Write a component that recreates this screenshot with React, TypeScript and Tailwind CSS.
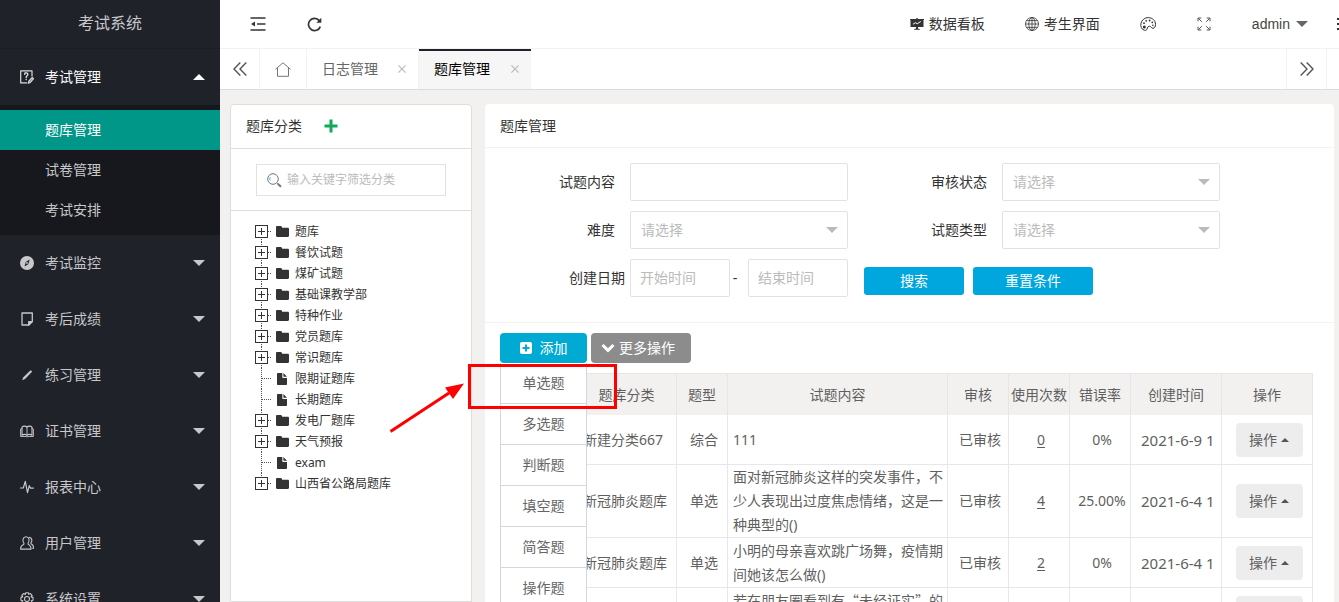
import React from "react";

type IconProps = { className?: string };

const Caret = ({ className = "" }: IconProps) => (
  <svg viewBox="0 0 12 6" className={`h-[6px] w-3 shrink-0 fill-current ${className}`} aria-hidden="true">
    <path d="M0 0h12L6 6z" />
  </svg>
);

const line = {
  fill: "none",
  stroke: "currentColor",
  strokeWidth: 1.1,
  strokeLinecap: "round" as const,
  strokeLinejoin: "round" as const,
};

const ExamIcon = () => (
  <svg viewBox="0 0 14 14" className="size-[14px] text-[#dcdcdc]" {...line}>
    <path d="M12 6V.8H.7v12.1h6" strokeWidth="1.2" />
    <path d="M4.6 4.4c.1-2.2 3.3-2 3.2 0 0 1.400-1.600 1.300-1.600 3M6.200 9.200v.3" strokeWidth="1.4" />
    <path d="M8.300 13.300l.5-2.200 3.400-3.700 1.400 1.300-3.300 3.800z" fill="currentColor" fillOpacity=".6" />
  </svg>
);
const CompassIcon = () => (
  <svg viewBox="0 0 14 14" className="size-[14px]">
    <circle cx="7" cy="7" r="7" fill="currentColor" />
    <path d="M9.700 3.600L8.200 8.200 4.500 10.500 5.800 6z" fill="#20222a" />
    <circle cx="7" cy="7" r=".9" fill="currentColor" />
  </svg>
);
const NoteIcon = () => (
  <svg viewBox="0 0 14 14" className="size-[14px]" {...line} strokeWidth={1.3}>
    <path d="M2 1h10.300v8.600l-3.600 3.400H2z" />
    <path d="M8.700 13V9.600h3.600z" fill="currentColor" />
  </svg>
);
const PencilIcon = () => (
  <svg viewBox="0 0 14 14" className="size-[14px]" fill="currentColor">
    <path d="M10.300 2.600c.7-.6 2.200.3 1.500 1.400L5 10.900l-2.800 1.300.9-2.800z" />
  </svg>
);
const BookIcon = () => (
  <svg viewBox="0 0 14 14" className="size-[14px]" {...line}>
    <path d="M7 3.200C5.800 1.800 3.200 1.800 2 3.200v8c1.500-.9 3.700-.9 5 0 1.300-.9 3.500-.9 5 0v-8c-1.200-1.400-3.800-1.400-5 0z" />
    <path d="M7 3.200v8M2 4.400L.6 5v7.500h5.500L7 13l.9-.5h5.500V5L12 4.400" strokeWidth=".9" />
  </svg>
);
const PulseIcon = () => (
  <svg viewBox="0 0 14 14" className="size-[14px]" {...line} strokeWidth={1.2}>
    <path d="M.5 8h2.800L5.300 1.300l2.200 11.400 1.800-7 1.100 2.400h3" />
  </svg>
);
const UsersIcon = () => (
  <svg viewBox="0 0 14 14" className="size-[14px]" {...line}>
    <path d="M4 7.300C1.800 4.700 3 .8 6 .8s4.200 3.900 2 6.500c-.3 1 .2 1.300 1.200 1.800 1.500.7 1.900 2 1.900 4H.6c0-2 .5-3.300 2.200-4 1-.5 1.500-.8 1.200-1.800z" />
    <path d="M9.300 1.400c2.700.4 3.200 3.400 1.700 5.400-.3.800 0 1.200.8 1.500 1.400.7 1.800 1.900 1.800 4h-1" />
  </svg>
);
const GearIcon = () => (
  <svg viewBox="0 0 14 14" className="size-[14px]" {...line}>
    <path d="M5.700.7h2.600l.4 1.700 1.500-.9 1.900 1.900-1 1.500 1.900.5v2.900l-1.800.4.9 1.500-1.900 1.900-1.500-.9-.5 1.800H5.700l-.4-1.800-1.600.9-1.900-1.900 1-1.500L.9 8.300V5.400l1.800-.5-.9-1.500 1.900-1.900 1.600.9z" />
    <circle cx="7" cy="7" r="2.500" />
  </svg>
);

const OutdentIcon = () => (
  <svg viewBox="0 0 16 14" className="h-[14px] w-4 text-[#333]" fill="none" stroke="currentColor" strokeWidth="1.600">
    <path d="M.5 1h15M7 7h8.500M.5 13h15" />
    <path d="M5 4.600v4.800L1 7z" fill="currentColor" stroke="none" />
  </svg>
);
const RefreshIcon = () => (
  <svg viewBox="0 0 15 15" className="size-[15px] text-[#333]" fill="none" stroke="currentColor" strokeWidth="1.700">
    <path d="M12.300 3.600A6.100 6.100 0 1 0 13.300 9.600" />
    <path d="M14.300.8v5H9.300z" fill="currentColor" stroke="none" />
  </svg>
);
const BoardIcon = () => (
  <svg viewBox="0 0 14 12" className="h-3 w-[14px] text-[#333]">
    <path d="M6.300 0h1.400v1H14v1h-.5v7H8v1.500l2 .7v.5H4v-.5l2-.7V9H.5V2H0V1h6.300z" fill="currentColor" />
    <path d="M3 6.300l2.300-1.600 2 1 3.500-2.200" fill="none" stroke="#fff" strokeWidth="1" />
  </svg>
);
const GlobeIcon = () => (
  <svg viewBox="0 0 14 14" className="size-[14px] text-[#333]" fill="none" stroke="currentColor" strokeWidth=".8">
    <circle cx="7" cy="7" r="6.500" />
    <ellipse cx="7" cy="7" rx="3.200" ry="6.500" />
    <path d="M7 .5v13M.5 7h13M1.500 3.600h11M1.500 10.400h11" />
  </svg>
);
const PaletteIcon = () => (
  <svg viewBox="0 0 16 14" className="h-[14px] w-4 text-[#333]" fill="none" stroke="currentColor" strokeWidth="1">
    <path d="M4.500 13.300C1.500 12.500.2 9.300 1 6.200 2 2.800 4.700.6 8.200.6c4.200 0 7.300 3 7.300 6.800 0 2.400-1.100 4-2.600 3.900-1.700-.2-1.700-2-3.500-2-2 0-1.800 1.500-2.300 2.700-.4 1-1.300 1.600-2.600 1.300z" />
    <g fill="currentColor" stroke="none">
      <circle cx="4.300" cy="10" r="1.500" />
      <circle cx="4" cy="6.200" r=".9" />
      <circle cx="6.200" cy="3.800" r=".9" />
      <circle cx="9.600" cy="3.500" r=".9" />
      <circle cx="12.300" cy="5.300" r=".9" />
      <circle cx="12.900" cy="8.200" r=".8" />
    </g>
  </svg>
);
const FullscreenIcon = () => (
  <svg viewBox="0 0 14 14" className="size-[14px] text-[#555]" fill="none" stroke="currentColor" strokeWidth="1">
    <path d="M1 4.300V1h3.300M1.200 1.200l3.600 3.600M9.700 1H13v3.300M12.800 1.200L9.200 4.800M1 9.700V13h3.300M1.200 12.800l3.600-3.600M9.700 13H13V9.700M12.800 12.800L9.200 9.200" />
  </svg>
);
const ChevronsIcon = ({ className = "" }: IconProps) => (
  <svg viewBox="0 0 14 14" className={`size-[14px] text-[#555] ${className}`} fill="none" stroke="currentColor" strokeWidth="1.400">
    <path d="M7.300.5L1 7l6.300 6.500M13.300.5L7 7l6.300 6.500" />
  </svg>
);
const HomeIcon = () => (
  <svg viewBox="0 0 16 15" className="h-[15px] w-4 text-[#777]" fill="none" stroke="currentColor" strokeWidth="1">
    <path d="M.5 7.300L8 .8l7.500 6.500M2.500 6v8.300h11V6" />
  </svg>
);
const CloseIcon = () => (
  <svg viewBox="0 0 8 8" className="size-2 text-[#bbb]" fill="none" stroke="currentColor" strokeWidth="1.200">
    <path d="M.4.4l7.200 7.200M7.600.4L.4 7.600" />
  </svg>
);
const FolderIcon = () => (
  <svg viewBox="0 0 13 11" className="h-[11px] w-[13px] fill-[#333]">
    <path d="M1.200 0h3.600c.6 0 .9.4 1.100 1l.3.700h5.600c.7 0 1.200.5 1.200 1.200v6.900c0 .7-.5 1.200-1.200 1.200H1.200C.5 11 0 10.500 0 9.800V1.200C0 .5.500 0 1.200 0z" />
  </svg>
);
const FileIcon = () => (
  <svg viewBox="0 0 13 12" className="h-3 w-[13px] fill-[#333]">
    <path d="M2 0h4.300v4.200c0 .5.300.8.800.8H11v6c0 .6-.4 1-1 1H2c-.6 0-1-.4-1-1V1c0-.6.400-1 1-1zM7.400 0L11 3.800H7.400z" />
  </svg>
);

const menus = [
  { label: "考试监控", icon: <CompassIcon /> },
  { label: "考后成绩", icon: <NoteIcon /> },
  { label: "练习管理", icon: <PencilIcon /> },
  { label: "证书管理", icon: <BookIcon /> },
  { label: "报表中心", icon: <PulseIcon /> },
  { label: "用户管理", icon: <UsersIcon /> },
  { label: "系统设置", icon: <GearIcon /> },
];

function Sidebar() {
  return (
    <aside className="flex w-[220px] shrink-0 flex-col bg-[#20222a] text-[#c7c8ca]">
      <h1 className="flex h-12 shrink-0 items-center justify-center text-base">考试系统</h1>
      <nav className="border-t border-[#1a1c22]">
        <a href="#exam" className="flex h-14 items-center pr-[15px] pl-5 text-white">
          <ExamIcon />
          <span className="ml-[11px] flex-1">考试管理</span>
          <Caret className="rotate-180" />
        </a>
        <div className="bg-[#17181d] py-[5px]">
          <a href="#bank" className="flex h-10 items-center bg-[#009688] pl-[45px] text-white">题库管理</a>
          <a href="#paper" className="flex h-10 items-center pl-[45px]">试卷管理</a>
          <a href="#plan" className="flex h-10 items-center pl-[45px]">考试安排</a>
        </div>
        {menus.map((m) => (
          <a key={m.label} href="#menu" className="flex h-14 items-center pr-[15px] pl-5">
            {m.icon}
            <span className="ml-[11px] flex-1">{m.label}</span>
            <Caret />
          </a>
        ))}
      </nav>
    </aside>
  );
}

function Header() {
  return (
    <header className="flex h-[49px] shrink-0 items-center border-b border-[#f2f2f2] bg-white pl-[10px] text-[#333]">
      <button aria-label="收起菜单" className="flex w-14 justify-center"><OutdentIcon /></button>
      <button aria-label="刷新" className="flex w-14 justify-center"><RefreshIcon /></button>
      <div className="ml-auto flex items-center">
        <a href="#board" className="flex items-center gap-[5px] px-5"><BoardIcon />数据看板</a>
        <a href="#student" className="flex items-center gap-[5px] px-5"><GlobeIcon />考生界面</a>
        <button aria-label="主题" className="flex w-14 justify-center"><PaletteIcon /></button>
        <button aria-label="全屏" className="flex w-14 justify-center"><FullscreenIcon /></button>
        <button className="flex items-center gap-[6px] px-5 text-[#444]">
          admin
          <Caret className="text-[#666]" />
        </button>
        <button aria-label="更多" className="flex w-[11px] justify-end overflow-hidden">
          <svg viewBox="0 0 2 14" className="h-[14px] w-[2px] fill-[#333]">
            <path d="M0 1h2v2H0zM0 6h2v2H0zM0 11h2v2H0z" />
          </svg>
        </button>
      </div>
    </header>
  );
}

function Tabs() {
  return (
    <div className="flex h-[41px] shrink-0 border-b border-[#dcdcdc] bg-white text-[#666]">
      <button aria-label="向左" className="flex w-10 items-center justify-center border-r border-[#f2f2f2]"><ChevronsIcon /></button>
      <button aria-label="主页" className="flex w-[47px] items-center justify-center border-r border-[#f2f2f2]"><HomeIcon /></button>
      <div className="flex w-28 items-center justify-between border-r border-[#f2f2f2] pr-3 pl-[15px]">
        <a href="#log">日志管理</a>
        <button aria-label="关闭日志管理"><CloseIcon /></button>
      </div>
      <div className="flex w-28 items-center justify-between border-t-2 border-[#20222a] bg-[#f6f6f6] pr-3 pb-[2px] pl-[15px] text-black">
        <a href="#bank">题库管理</a>
        <button aria-label="关闭题库管理"><CloseIcon /></button>
      </div>
      <button aria-label="向右" className="mr-3 ml-auto flex w-[41px] items-center justify-center border-x border-[#f2f2f2]">
        <ChevronsIcon className="rotate-180" />
      </button>
    </div>
  );
}

const tree: { name: string; leaf?: boolean }[] = [
  { name: "题库" },
  { name: "餐饮试题" },
  { name: "煤矿试题" },
  { name: "基础课教学部" },
  { name: "特种作业" },
  { name: "党员题库" },
  { name: "常识题库" },
  { name: "限期证题库", leaf: true },
  { name: "长期题库", leaf: true },
  { name: "发电厂题库" },
  { name: "天气预报" },
  { name: "exam", leaf: true },
  { name: "山西省公路局题库" },
];

function Connector({ leaf, first, last }: { leaf?: boolean; first: boolean; last: boolean }) {
  return (
    <svg viewBox="0 0 18 21" className="h-[21px] w-[18px]" fill="none" stroke="#555" shapeRendering="crispEdges">
      {!first && <path d="M6.500 0v10" strokeDasharray="1 1" />}
      {!last && <path d="M6.500 10v11" strokeDasharray="1 1" />}
      <path d="M7 10.500h10" strokeDasharray="1 1" />
      {!leaf && (
        <>
          <path d="M.5 4.500h12v12H.5z" fill="#fff" stroke="#333" />
          <path d="M3 10.500h7M6.500 7v7" stroke="#333" />
        </>
      )}
    </svg>
  );
}

function Categories() {
  return (
    <section className="w-[242px] shrink-0 rounded-t border border-[#dedede] bg-white">
      <div className="flex h-11 items-center border-b border-[#dedede] pb-[2px] pl-[15px] text-[#333]">
        <h2>题库分类</h2>
        <button aria-label="新增分类" className="ml-[22px]">
          <svg viewBox="0 0 14 14" className="size-[14px] fill-[#0fa958]">
            <path d="M5.500.5h3v5h5v3h-5v5h-3v-5h-5v-3h5z" />
          </svg>
        </button>
      </div>
      <div className="border-b border-[#dedede] px-[25px] pt-[15px] pb-[14px]">
        <label className="flex h-8 items-center gap-[5px] border border-[#e2e2e2] pl-[10px]">
          <svg viewBox="0 0 15 15" className="size-[15px] shrink-0" fill="none" stroke="#777" strokeWidth="1">
            <circle cx="6" cy="6" r="5.300" />
            <path d="M3.200 7.500a3.300 3.300 0 0 1 0-3.300" stroke="#5aa5e0" />
            <path d="M9.800 9.800l1 1" />
            <path d="M10.800 10.800l3.200 3" strokeWidth="2" />
          </svg>
          <input aria-label="筛选分类" placeholder="输入关键字筛选分类" className="w-full min-w-0 text-xs outline-none placeholder:text-[#bbb]" />
        </label>
      </div>
      <ul className="pt-[10px] pl-6 font-['Noto_Sans','Noto_Sans_CJK_SC',sans-serif] text-xs text-[#333]">
        {tree.map((n, i) => (
          <li key={n.name} className="flex h-[21px] items-center">
            <Connector leaf={n.leaf} first={i === 0} last={i === tree.length - 1} />
            <span className="ml-[3px]">{n.leaf ? <FileIcon /> : <FolderIcon />}</span>
            <a href="#node" className="ml-[6px]">{n.name}</a>
          </li>
        ))}
      </ul>
    </section>
  );
}

function SelectField({ id, label }: { id: string; label: string }) {
  return (
    <>
      <label htmlFor={id} className="pr-[15px] text-right">{label}</label>
      <div className="relative">
        <select id={id} className="h-[38px] w-full appearance-none rounded-[2px] border border-[#e2e2e2] bg-white px-[10px] text-[#bbb]">
          <option>请选择</option>
        </select>
        <Caret className="pointer-events-none absolute top-4 right-[10px] text-[#bbb]" />
      </div>
    </>
  );
}

const field = "h-[38px] rounded-[2px] border border-[#e2e2e2] px-[9px] outline-none placeholder:text-[#bbb]";

function Filters() {
  return (
    <form className="border-b border-[#f3f3f3] pt-[15px] pb-[25px] text-[#333]">
      <div className="grid grid-cols-[145px_218px_154px_218px] items-center gap-y-[10px]">
        <label htmlFor="content" className="pr-[15px] text-right">试题内容</label>
        <input id="content" className={field} />
        <SelectField id="status" label="审核状态" />
        <SelectField id="level" label="难度" />
        <SelectField id="type" label="试题类型" />
      </div>
      <div className="mt-[10px] flex items-center">
        <label htmlFor="start" className="w-[145px] pr-[5px] text-right">创建日期</label>
        <input id="start" placeholder="开始时间" className={`w-[100px] ${field}`} />
        <span className="w-[18px] pr-2 text-center">-</span>
        <input aria-label="结束时间" placeholder="结束时间" className={`w-[100px] ${field}`} />
        <button type="button" className="mt-[6px] ml-4 h-7 w-[100px] rounded-[3px] bg-[#00a6de] text-white">搜索</button>
        <button type="button" className="mt-[6px] ml-[9px] h-7 w-[120px] rounded-[3px] bg-[#00a6de] text-white">重置条件</button>
      </div>
    </form>
  );
}

const addTypes = ["单选题", "多选题", "判断题", "填空题", "简答题", "操作题"];

function Toolbar() {
  return (
    <div className="relative flex gap-1 text-white">
      <button className="flex h-[30px] w-[87px] items-center justify-center gap-2 rounded bg-[#00aad2]">
        <svg viewBox="0 0 12 12" className="size-3">
          <rect width="12" height="12" rx="2" fill="#fff" />
          <path d="M6 2.500v7M2.500 6h7" stroke="#00aad2" strokeWidth="2" />
        </svg>
        添加
      </button>
      <button className="flex h-[30px] w-[100px] items-center gap-1 rounded bg-[#8c8c8c] pl-[10px]">
        <svg viewBox="0 0 14 10" className="h-[10px] w-[14px]" fill="none" stroke="#fff" strokeWidth="3">
          <path d="M1.500 2L7 7.300 12.500 2" />
        </svg>
        更多操作
      </button>
      <ul className="absolute top-[30px] left-0 z-10 w-[87px] border-x border-[#d6d6d6] bg-white text-[#666]">
        {addTypes.map((t) => (
          <li key={t}>
            <button className="flex h-[41px] w-full items-center justify-center border-b border-[#d6d6d6]">{t}</button>
          </li>
        ))}
      </ul>
      <div className="pointer-events-none absolute top-[31px] -left-8 z-20 h-[45px] w-[149px] border-3 border-[#fe0000]" />
      <svg viewBox="0 0 76 52" className="pointer-events-none absolute top-[49px] -left-[111px] z-20 h-[52px] w-[76px]">
        <path d="M1.500 49.500L60 11" stroke="#fe0000" strokeWidth="3" />
        <path d="M75 1.500L56 5.500 64 17z" fill="#fe0000" />
      </svg>
    </div>
  );
}

const rows = [
  { cat: "新建分类667", type: "综合", text: "111", used: 0, rate: "0%", date: "2021-6-9 1" },
  { cat: "新冠肺炎题库", type: "单选", text: "面对新冠肺炎这样的突发事件，不少人表现出过度焦虑情绪，这是一种典型的()", used: 4, rate: "25.00%", date: "2021-6-4 1" },
  { cat: "新冠肺炎题库", type: "单选", text: "小明的母亲喜欢跳广场舞，疫情期间她该怎么做()", used: 2, rate: "0%", date: "2021-6-4 1" },
  { cat: "新冠肺炎题库", type: "单选", text: "若在朋友圈看到有“未经证实”的", quoted: true, used: 2, rate: "0%", date: "2021-6-4 1" },
];
const heads = ["", "题库分类", "题型", "试题内容", "审核", "使用次数", "错误率", "创建时间", "操作"];
const cell = "border-r border-b border-[#e4e7ee] p-0";

function QuestionTable() {
  return (
    <table className="mt-[10px] w-full table-fixed border-separate border-spacing-0 font-['Noto_Sans','Noto_Sans_CJK_SC',sans-serif] text-[#5f5f5f]">
      <colgroup>
        <col className="w-[77px]" />
        <col className="w-[100px]" />
        <col className="w-[51px]" />
        <col />
        <col className="w-[61px]" />
        <col className="w-[61px]" />
        <col className="w-[61px]" />
        <col className="w-[91px]" />
        <col className="w-[91px]" />
      </colgroup>
      <thead>
        <tr className="h-[42px]">
          {heads.map((h) => (
            <th key={h} className="border-t border-r border-[#e6e6e6] bg-[#f2f1f0] p-0 text-center font-normal whitespace-nowrap">{h}</th>
          ))}
        </tr>
      </thead>
      <tbody className="leading-6">
        {rows.map((r, i) => (
          <tr key={i} className="h-[50px]">
            <td className={cell} />
            <td className={`${cell} pl-[6px] whitespace-nowrap`}>{r.cat}</td>
            <td className={`${cell} pl-1 text-center`}>{r.type}</td>
            <td className={`${cell} pr-[3px] pl-[5px] ${r.quoted ? "align-top font-['Noto_Sans_CJK_SC',sans-serif]" : ""}`}>{r.text}</td>
            <td className={`${cell} pl-1 text-center`}>已审核</td>
            <td className={`${cell} pl-1 text-center`}><a href="#used" className="underline underline-offset-2">{r.used}</a></td>
            <td className={`${cell} pl-1 text-center`}>{r.rate}</td>
            <td className={`${cell} overflow-hidden pl-[10px] text-[15px] whitespace-nowrap`}>{r.date}</td>
            <td className={`${cell} pl-1`}>
              <button className="mx-auto flex h-[34px] w-[67px] items-center justify-center gap-1 rounded bg-[#ededed]">
                操作
                <svg viewBox="0 0 8 4" className="h-1 w-2 fill-[#555]"><path d="M0 4h8L4 0z" /></svg>
              </button>
            </td>
          </tr>
        ))}
      </tbody>
    </table>
  );
}

export default function App() {
  return (
    <div lang="zh-CN" className="flex h-screen overflow-hidden bg-[#f2f1f0] font-['Liberation_Sans','Noto_Sans_CJK_SC',sans-serif] text-sm">
      <Sidebar />
      <div className="flex min-w-0 flex-1 flex-col">
        <Header />
        <Tabs />
        <main className="flex min-h-0 flex-1 gap-[13px] pt-[14px] pr-[5px] pl-[10px]">
          <Categories />
          <section className="min-w-0 flex-1 rounded-t bg-white">
            <h2 className="flex h-11 items-center border-b border-[#f3f3f3] pl-[15px] text-[#333]">题库管理</h2>
            <Filters />
            <div className="pt-[10px] pr-[21px] pl-[15px]">
              <Toolbar />
              <QuestionTable />
            </div>
          </section>
        </main>
      </div>
    </div>
  );
}
